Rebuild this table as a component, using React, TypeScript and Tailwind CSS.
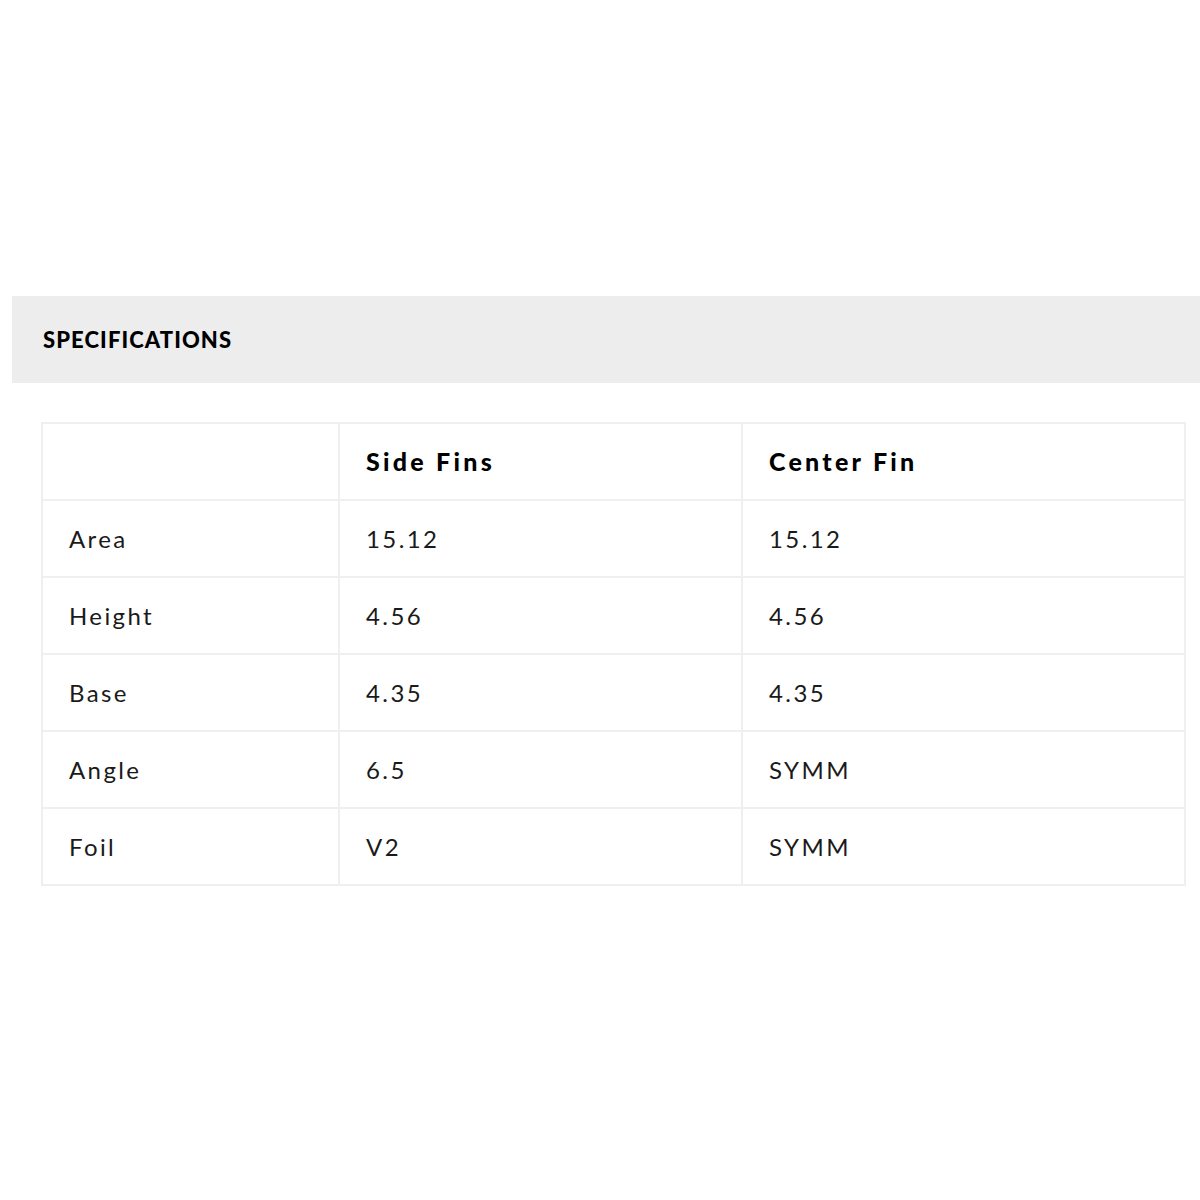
const rows = [
  { label: 'Area', side: '15.12', center: '15.12' },
  { label: 'Height', side: '4.56', center: '4.56' },
  { label: 'Base', side: '4.35', center: '4.35' },
  { label: 'Angle', side: '6.5', center: 'SYMM' },
  { label: 'Foil', side: 'V2', center: 'SYMM' },
]

export default function App() {
  return (
    <div className="min-h-[1200px] bg-white pt-[296px] font-['Lato',sans-serif] text-[#1a1a1a]">
      {/* Section header bar */}
      <div className="ml-[12px] flex h-[87px] items-center bg-[#ededed] pl-[31px]">
        <h2 className="text-[22px] font-black uppercase tracking-[0.05em] text-black">Specifications</h2>
      </div>

      {/* Spec table */}
      <table className="ml-[41px] mt-[39px] w-[1145px] table-fixed border-collapse border-2 border-[#efefef] text-[24px] tracking-[0.1em]">
        <colgroup>
          <col className="w-[297px]" />
          <col className="w-[403px]" />
          <col />
        </colgroup>
        <thead>
          <tr className="h-[77px]">
            <th className="border-2 border-[#efefef] px-[26px]" />
            <th className="border-2 border-[#efefef] px-[26px] text-left text-[25px] font-black tracking-[0.13em] text-black">Side Fins</th>
            <th className="border-2 border-[#efefef] px-[26px] text-left text-[25px] font-black tracking-[0.13em] text-black">Center Fin</th>
          </tr>
        </thead>
        <tbody>
          {rows.map((r) => (
            <tr key={r.label} className="h-[77px]">
              <td className="border-2 border-[#efefef] px-[26px]">{r.label}</td>
              <td className="border-2 border-[#efefef] px-[26px]">{r.side}</td>
              <td className="border-2 border-[#efefef] px-[26px]">{r.center}</td>
            </tr>
          ))}
        </tbody>
      </table>
    </div>
  )
}
